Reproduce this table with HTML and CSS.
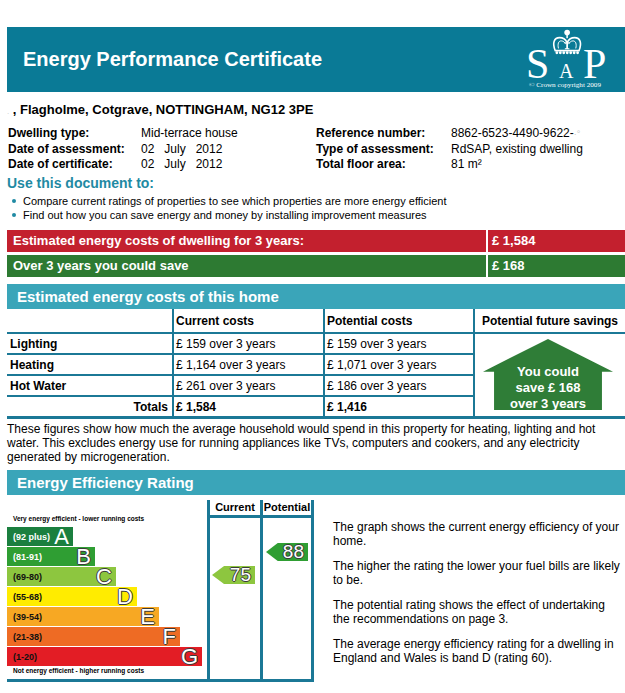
FILE: index.html
```html
<!DOCTYPE html>
<html lang="en">
<head>
<meta charset="utf-8">
<title>Energy Performance Certificate</title>
<link rel="stylesheet" href="styles.css">
</head>
<body>
<div class="page">
  <header class="hdr">
    <h1 class="title">Energy Performance Certificate</h1>
    <svg class="sap" width="82" height="62" viewBox="0 0 82 62" aria-label="SAP">
      <text x="0" y="49" class="sap-big">S</text>
      <text x="33" y="49" class="sap-a">A</text>
      <text x="57" y="49" class="sap-big">P</text>
      <g transform="translate(26,0) scale(1.08)" fill="none" stroke="#fff">
        <circle cx="14" cy="3.2" r="2.6" fill="#fff" stroke="none"/>
        <rect x="13.3" y="5.5" width="1.4" height="3" fill="#fff" stroke="none"/>
        <path d="M3 20 C0 13 2 8 7 8 C11 8 13 10.5 14 12.5 C15 10.5 17 8 21 8 C26 8 28 13 25 20 Z" stroke-width="1.5"/>
        <path d="M6 18 C5 14 6 11 8.5 11 C10.5 11 12 12.5 12.5 14" stroke-width="0.9"/>
        <path d="M22 18 C23 14 22 11 19.5 11 C17.5 11 16 12.5 15.5 14" stroke-width="0.9"/>
        <rect x="13.2" y="12.5" width="1.6" height="6" fill="#fff" stroke="none"/>
        <rect x="11.9" y="12.3" width="4.2" height="1" fill="#fff" stroke="none"/>
        <rect x="11.9" y="17.8" width="4.2" height="1" fill="#fff" stroke="none"/>
        <g fill="#fff" stroke="none">
          <circle cx="4.5" cy="22" r="1.3"/><circle cx="7.7" cy="22" r="1.3"/><circle cx="10.9" cy="22" r="1.3"/>
          <circle cx="14.1" cy="22" r="1.3"/><circle cx="17.3" cy="22" r="1.3"/><circle cx="20.5" cy="22" r="1.3"/>
          <circle cx="23.7" cy="22" r="1.3"/>
        </g>
      </g>
      <text x="3" y="58" class="sap-copy" textLength="72" lengthAdjust="spacingAndGlyphs">© Crown copyright 2009</text>
    </svg>
  </header>

  <div class="addr"><span class="redact">.</span> , Flagholme, Cotgrave, NOTTINGHAM, NG12 3PE</div>

  <div class="details">
    <div class="lbl">Dwelling type:</div><div class="val">Mid-terrace house</div>
    <div class="lbl">Reference number:</div><div class="val">8862-6523-4490-9622-<span class="redact2">·°</span></div>
    <div class="lbl">Date of assessment:</div><div class="val">02   July   2012</div>
    <div class="lbl">Type of assessment:</div><div class="val">RdSAP, existing dwelling</div>
    <div class="lbl">Date of certificate:</div><div class="val">02   July   2012</div>
    <div class="lbl">Total floor area:</div><div class="val">81 m²</div>
  </div>

  <h2 class="use-title">Use this document to:</h2>
  <ul class="bullets">
    <li>Compare current ratings of properties to see which properties are more energy efficient</li>
    <li>Find out how you can save energy and money by installing improvement measures</li>
  </ul>

  <div class="bar bar-red"><div class="lab">Estimated energy costs of dwelling for 3 years:</div><div class="amt">£ 1,584</div></div>
  <div class="bar bar-green"><div class="lab">Over 3 years you could save</div><div class="amt">£ 168</div></div>

  <h2 class="sect">Estimated energy costs of this home</h2>
  <div class="costs">
    <div class="c"></div>
    <div class="c cl b">Current costs</div>
    <div class="c cl b">Potential costs</div>
    <div class="c cl b ctr">Potential future savings</div>

    <div class="c b first">Lighting</div>
    <div class="c cl">£ 159 over 3 years</div>
    <div class="c cl">£ 159 over 3 years</div>
    <div class="savings">
      <div class="house">You could<br>save £ 168<br>over 3 years</div>
    </div>

    <div class="c b first">Heating</div>
    <div class="c cl">£ 1,164 over 3 years</div>
    <div class="c cl">£ 1,071 over 3 years</div>

    <div class="c b first">Hot Water</div>
    <div class="c cl">£ 261 over 3 years</div>
    <div class="c cl">£ 186 over 3 years</div>

    <div class="c b last totals">Totals</div>
    <div class="c cl b last">£ 1,584</div>
    <div class="c cl b last">£ 1,416</div>
  </div>

  <p class="note">These figures show how much the average household would spend in this property for heating, lighting and hot water. This excludes energy use for running appliances like TVs, computers and cookers, and any electricity generated by microgeneration.</p>

  <h2 class="sect sect2">Energy Efficiency Rating</h2>
  <div class="rating">
    <div class="chart">
      <div class="scale">
        <div class="scale-note">Very energy efficient - lower running costs</div>
        <div class="bands">
          <div class="band band-a"><span class="range light">(92 plus)</span><span class="letter">A</span></div>
          <div class="band band-b"><span class="range light">(81-91)</span><span class="letter">B</span></div>
          <div class="band band-c"><span class="range">(69-80)</span><span class="letter">C</span></div>
          <div class="band band-d"><span class="range">(55-68)</span><span class="letter">D</span></div>
          <div class="band band-e"><span class="range">(39-54)</span><span class="letter">E</span></div>
          <div class="band band-f"><span class="range">(21-38)</span><span class="letter">F</span></div>
          <div class="band band-g"><span class="range">(1-20)</span><span class="letter">G</span></div>
        </div>
        <div class="scale-note bottom">Not energy efficient - higher running costs</div>
      </div>
      <div class="col col-cur">
        <div class="col-head">Current</div>
        <div class="col-body">
          <div class="arrow arrow-c" style="margin-top:48px">75</div>
        </div>
      </div>
      <div class="col col-pot">
        <div class="col-head">Potential</div>
        <div class="col-body">
          <div class="arrow arrow-b" style="margin-top:25px">88</div>
        </div>
      </div>
    </div>
    <div class="explain">
      <p>The graph shows the current energy efficiency of your home.</p>
      <p>The higher the rating the lower your fuel bills are likely to be.</p>
      <p>The potential rating shows the effect of undertaking the recommendations on page 3.</p>
      <p>The average energy efficiency rating for a dwelling in England and Wales is band D (rating 60).</p>
    </div>
  </div>
</div>
</body>
</html>
```

FILE: styles.css
```css
* { box-sizing: border-box; margin: 0; padding: 0; }
body { margin: 0; background: #fff; font-family: "Liberation Sans", Arial, sans-serif; color: #000; }
.page { padding: 27px 0 0 7px; width: 625px; }

.hdr { height: 65px; background: #0a7a96; display: flex; align-items: center; justify-content: space-between; padding: 0 17px 0 16px; }
.title { font-size: 20px; font-weight: bold; color: #fff; }
.sap { display: block; }
.sap-big { font-family: "Liberation Serif", "Times New Roman", serif; font-size: 42px; fill: #fff; }
.sap-a { font-family: "Liberation Serif", "Times New Roman", serif; font-size: 20px; fill: #fff; }
.sap-copy { font-family: "Liberation Serif", "Times New Roman", serif; font-size: 6.5px; fill: #fff; }

.addr { margin-top: 10px; font-size: 13px; font-weight: bold; line-height: 16px; }
.redact { color: #c8c8c8; font-size: 8px; font-weight: normal; }
.redact2 { color: #c8c8c8; font-size: 9px; }

.details { margin-top: 6px; display: grid; grid-template-columns: 133px 175px 135px 1fr; font-size: 12px; line-height: 15px; padding-left: 1px; }
.lbl { font-weight: bold; }
.val { white-space: pre; }

.use-title { margin-top: 2px; color: #1f8aa3; font-size: 14px; font-weight: bold; line-height: 18px; }
.bullets { margin-top: 2px; list-style: none; font-size: 11px; line-height: 14px; }
.bullets li { display: flex; align-items: center; }
.bullets li::before { content: ""; flex: none; width: 4px; height: 4px; border-radius: 50%; background: #1f8aa3; margin: 0 7px 0 5px; }

.bar { display: flex; height: 22px; color: #fff; font-weight: bold; font-size: 13px; line-height: 22px; }
.bar-red { margin-top: 8px; background: #c3202e; }
.bar-green { margin-top: 3px; background: #2d7a32; }
.bar .lab { width: 481px; padding-left: 6px; border-right: 2px solid #fff; }
.bar .amt { padding-left: 4px; }

.sect { margin-top: 7px; height: 25px; background: #3aa5b9; color: #fff; font-size: 15px; font-weight: bold; line-height: 25px; padding-left: 10px; }
.sect2 { margin-top: 6px; }

.costs { display: grid; grid-template-columns: 165px 151px 150px 1fr; grid-template-rows: 25px 21px 21px 21px 19px; font-size: 12px; border-bottom: 3px solid #1b7896; }
.c { border-bottom: 2px solid #1b7896; display: flex; align-items: center; padding-left: 2px; white-space: nowrap; }
.c.cl { border-left: 2px solid #1b7896; }
.c.b { font-weight: bold; }
.c.first { padding-left: 3px; }
.c.ctr { justify-content: center; padding-left: 0; }
.c.last { border-bottom: none; }
.c.totals { justify-content: flex-end; padding-right: 4px; }
.savings { grid-column: 4; grid-row: 2 / 6; border-left: 2px solid #1b7896; }
.house { width: 130px; height: 71px; margin: 5px 0 0 8px; background: #2f7d37; clip-path: polygon(50% 0, 100% 46%, 91.5% 46%, 91.5% 100%, 8.5% 100%, 8.5% 46%, 0 46%); color: #fff; font-weight: bold; font-size: 13px; line-height: 16px; text-align: center; padding-top: 25px; }

.note { margin-top: 3px; font-size: 12px; line-height: 14px; width: 605px; }

.rating { display: flex; margin-top: 5px; }
.chart { display: flex; width: 307px; height: 182px; border-bottom: 3px solid #1b7896; }
.scale { width: 200px; padding-top: 15px; }
.scale-note { font-size: 6.5px; font-weight: bold; line-height: 8px; padding-left: 6px; white-space: nowrap; }
.scale-note.bottom { margin-top: 1px; }
.bands { margin-top: 4px; }
.band { height: 19px; margin-bottom: 1px; display: flex; align-items: center; justify-content: space-between; padding: 0 4px 0 6px; }
.range { font-size: 9px; font-weight: bold; color: #111; }
.range.light { color: #fff; }
.letter { font-size: 22px; line-height: 19px; color: #fff; text-shadow: -1px 0 #3a3a3a, 1px 0 #3a3a3a, 0 -1px #3a3a3a, 0 1px #3a3a3a; }
.band-a .letter { text-shadow: none; }
.band-a { width: 66px; background: #1b7f3f; }
.band-b { width: 88px; background: #2f9e33; }
.band-c { width: 109px; background: #8dc63f; }
.band-d { width: 130px; background: #ffec00; }
.band-e { width: 152px; background: #f7a823; }
.band-f { width: 173px; background: #ee6b24; }
.band-g { width: 195px; background: #e31d25; }

.col { display: flex; flex-direction: column; border-left: 3px solid #1b7896; }
.col-cur { width: 53px; }
.col-pot { width: 54px; border-right: 3px solid #1b7896; }
.col-head { height: 18px; border-bottom: 3px solid #1b7896; font-size: 11px; font-weight: bold; line-height: 15px; text-align: center; }
.col-body { flex: 1; display: flex; flex-direction: column; }
.arrow { align-self: flex-end; height: 18px; font-size: 19px; line-height: 18px; text-align: right; padding-right: 4px; color: #fff; text-shadow: -1px 0 #3a3a3a, 1px 0 #3a3a3a, 0 -1px #3a3a3a, 0 1px #3a3a3a; clip-path: polygon(0 50%, 28% 0, 100% 0, 100% 100%, 28% 100%); }
.arrow-c { width: 43px; margin-right: 5px; background: #8dc63f; }
.arrow-b { width: 42px; margin-right: 3px; background: #2f9e33; }

.explain { margin-left: 19px; padding-top: 20px; width: 288px; font-size: 12px; line-height: 14px; }
.explain p + p { margin-top: 11px; }
```
